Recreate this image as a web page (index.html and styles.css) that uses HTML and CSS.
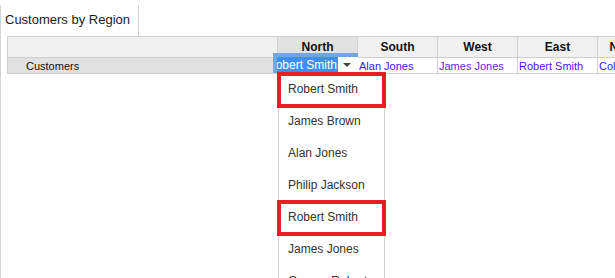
FILE: index.html
```html
<!DOCTYPE html>
<html lang="en">
<head>
  <meta charset="UTF-8" />
  <title>Customers by Region</title>
  <link rel="stylesheet" href="styles.css">
</head>
<body>
  <div class="painel">
    <div class="abas">
      <div class="aba">Customers by Region</div>
    </div>

    <table class="grade">
      <colgroup>
        <col class="col-rotulo" />
        <col class="col-regiao" />
        <col class="col-regiao" />
        <col class="col-regiao" />
        <col class="col-regiao" />
        <col class="col-regiao" />
      </colgroup>
      <thead>
        <tr>
          <th class="canto"></th>
          <th class="ativa">North</th>
          <th>South</th>
          <th>West</th>
          <th>East</th>
          <th>Northeast</th>
        </tr>
      </thead>
      <tbody>
        <tr>
          <td class="rotulo">Customers</td>
          <td></td>
          <td class="cor-a">Alan Jones</td>
          <td class="cor-b">James Jones</td>
          <td class="cor-c">Robert Smith</td>
          <td class="cor-a">Colin Baker</td>
        </tr>
      </tbody>
    </table>

    <div class="editor">
      <div class="editor-texto"><span>Robert Smith</span></div>
      <div class="editor-seta"></div>
    </div>

    <ul class="lista">
      <li class="marcado">Robert Smith</li>
      <li>James Brown</li>
      <li>Alan Jones</li>
      <li>Philip Jackson</li>
      <li class="marcado">Robert Smith</li>
      <li>James Jones</li>
      <li>George Roberts</li>
    </ul>
  </div>
</body>
</html>
```

FILE: styles.css
```css
:root {
  --borda: #cfcfcf;
  --cabecalho: #f0f0f0;
  --cabecalho-ativo: #e2e2e2;
  --rotulo: #e1e1e1;
  --azul-foco: #72a8e2;
  --azul-selecao: #3f8ff2;
  --vermelho: #ea1c24;
  --texto: #222;
}
* {
  box-sizing: border-box;
}
html, body {
  margin: 0;
  overflow: hidden;
  background: white;
}
body {
  font-family: 'Liberation Sans', Arial, sans-serif;
  color: var(--texto);
}
.painel {
  position: relative;
  margin-top: 5px;
  height: 273px;
  border-left: 1px solid #d6d6d6;
}
.abas {
  display: flex;
  height: 31px;
}
.aba {
  width: 138px;
  padding-left: 4px;
  border-right: 1px solid #d6d6d6;
  font-size: 13px;
  line-height: 30px;
  color: #1a1a28;
}
.grade {
  margin-left: 6px;
  width: 671px;
  table-layout: fixed;
  border-collapse: collapse;
  font-size: 11px;
}
.col-rotulo {
  width: 270px;
}
.col-regiao {
  width: 80px;
}
th, td {
  border: 1px solid var(--borda);
  padding: 0 1px;
  white-space: nowrap;
  overflow: hidden;
}
th {
  height: 21px;
  background-color: var(--cabecalho);
  font-size: 12px;
  font-weight: bold;
  color: #111;
  text-align: center;
}
th.ativa {
  background-color: var(--cabecalho-ativo);
}
td {
  height: 16px;
  text-align: left;
}
td.rotulo {
  background-color: var(--rotulo);
  padding-left: 18px;
  color: #111;
}
.cor-a {
  color: #3422ff;
}
.cor-b {
  color: #6424d6;
}
.cor-c {
  color: #5a0cff;
}
.editor {
  position: absolute;
  left: 272px;
  top: 48px;
  width: 85px;
  height: 20px;
  display: flex;
  background: white;
  border-top: 4px solid var(--azul-foco);
  border-left: 4px solid var(--azul-foco);
}
.editor-texto {
  width: 61px;
  overflow: hidden;
  background: var(--azul-selecao);
  color: white;
  font-size: 12px;
  line-height: 16px;
  white-space: nowrap;
}
.editor-texto span {
  display: inline-block;
  margin-left: -10px;
}
.editor-seta {
  flex: 1;
  position: relative;
}
.editor-seta::after {
  content: '';
  position: absolute;
  left: 5px;
  top: 6px;
  border-left: 4px solid transparent;
  border-right: 4px solid transparent;
  border-top: 4px solid #444;
}
.lista {
  position: absolute;
  left: 277px;
  top: 69px;
  width: 107px;
  height: 230px;
  margin: 0;
  padding: 0;
  list-style: none;
  background: white;
  border: 1px solid var(--borda);
  border-top: none;
}
.lista li {
  height: 32px;
  padding-left: 9px;
  font-size: 12px;
  line-height: 31px;
  color: #333;
  white-space: nowrap;
}
.lista li.marcado {
  outline: 4px solid var(--vermelho);
  outline-offset: -2px;
}
```
